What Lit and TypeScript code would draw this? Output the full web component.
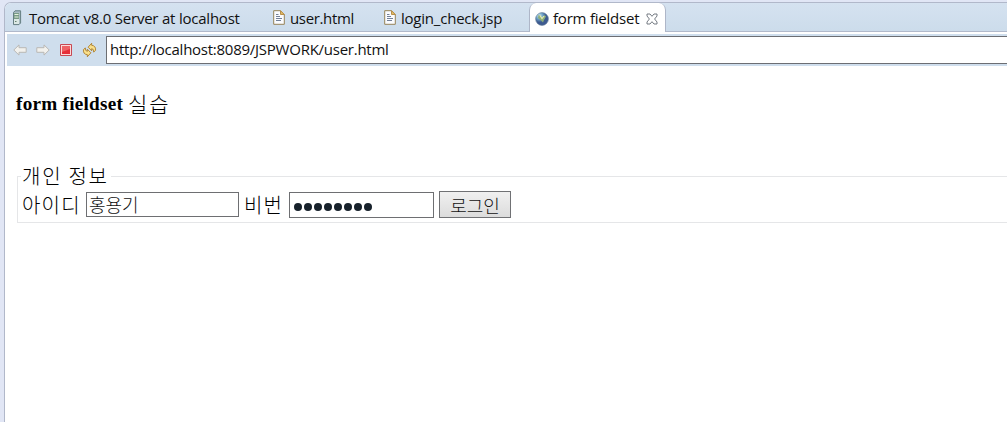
import { LitElement, html, css, svg } from "lit";
import { customElement } from "lit/decorators.js";

const serverIcon = html`<svg class="icon" width="10" height="16" viewBox="0 0 10 16">
  <path d="M1.5 2.5L3 .8H8.6V13L7 14.6H1.5Z" fill="#a9bcc4" stroke="#667f83"/>
  <path d="M2 3H7V14H2Z" fill="#dce8e5"/><path d="M2 3H7V9H2Z" fill="#789b85"/>
  <path d="M2.5 4.5H6.5M2.5 7H6.5" stroke="#e7f1df"/><path d="M3 11.5H4.5" stroke="#61806e"/>
</svg>`;

const fileIcon = html`<svg class="icon" width="12" height="15" viewBox="0 0 12 15">
  <path d="M.7.7H7.5L11.3 4.5V14.3H.7Z" fill="#fbfcff" stroke="#958358"/>
  <path d="M7.5.7V4.5H11.3Z" fill="#e6bd66" stroke="#b8904b"/>
  <path d="M3 4.5H5.5M3 6.5H7M3 8.5H9M3 10.5H8" stroke="#62728c" stroke-width=".9"/>
</svg>`;

const globeIcon = html`<svg class="icon" width="14" height="14" viewBox="0 0 14 14">
  <defs><radialGradient id="sea" cx=".3" cy=".25"><stop stop-color="#cbe8f4"/><stop offset=".55" stop-color="#6b9fc4"/><stop offset="1" stop-color="#3d5a90"/></radialGradient></defs>
  <circle cx="7" cy="7" r="6.4" fill="url(#sea)" stroke="#657d99" stroke-width=".6"/>
  <path d="M3.5 3L6 4L7.3 6.5L9.5 3L11 4.5L9 8L8 10.5L6 8.5L3 6Z" fill="#8fae78"/>
  <path d="M5 3.5L7 6.5L9 4" fill="none" stroke="#e8edb4" stroke-width="1.2"/>
</svg>`;

const closeIcon = html`<svg class="icon" width="12" height="12" viewBox="0 0 12 12">
  <path d="M1 1H4L6 3.3L8 1H11V3L8.6 6L11 9V11H8L6 8.7L4 11H1V9L3.4 6L1 3Z" fill="#fff" stroke="#666d76" stroke-width=".9"/>
</svg>`;

const arrow = svg`<path d="M.8 6L6 .9V3.7H13.2V8.3H6V11.1Z" fill="#f2f1ed" stroke="#b9b8b5" stroke-linejoin="round"/>`;

@customElement("app-root")
export class AppRoot extends LitElement {
  static styles = css`
    :host { display: block; height: 422px; overflow: hidden; background: #e1e6f5; color: #111; }
    * { box-sizing: border-box; }
    .view { height: 422px; margin-left: 4px; padding-top: 2px; }
    .frame { height: 420px; border: 1px solid #b1b8ca; border-width: 1px 0 0 1px; border-top-left-radius: 7px; background: #fff; overflow: hidden; }
    .tabs { display: flex; height: 29px; border-bottom: 1px solid #b1b9cb; background: linear-gradient(#d5e2f0, #ccdceb); font: 15px/28px "Open Sans", sans-serif; }
    .tab { display: flex; flex: none; align-items: center; white-space: pre; height: 29px; }
    .server { width: 259px; padding-left: 7px; gap: 7px; }
    .file1 { width: 111px; padding-left: 9px; gap: 5px; }
    .file2 { width: 149px; padding-left: 9px; gap: 5px; }
    .active { width: 137px; margin-left: 5px; padding-left: 5px; gap: 4px; background: #fff; border: 1px solid #aeb6c8; border-width: 0 1px; border-radius: 7px 7px 0 0; }
    .icon { display: block; flex: none; }
    .label { display: block; flex: none; height: 28px; }
    .active .icon { margin-top: 2px; }
    .t1 { width: 212px; letter-spacing: -.22px; }
    .t2 { width: 62px; letter-spacing: -.35px; }
    .t3 { width: 103px; letter-spacing: -.22px; }
    .t4 { width: 89px; letter-spacing: -.22px; }
    .bar { display: flex; align-items: center; margin: 2px 0 0 2px; height: 32px; background: #cfdeed; }
    .nav { display: grid; grid-template-columns: 23px 24px 22px 30px; align-items: center; width: 99px; padding-left: 6px; height: 32px; }
    .url { flex: 1; height: 28px; margin-bottom: 1px; border: 1px solid #6c6e73; border-right: 0; background: #fff; padding-left: 3px; font: 15px/25px "Open Sans", sans-serif; letter-spacing: -.25px; }
    .page { padding-left: 10px; font: 300 20px/24px "Noto Sans CJK KR", sans-serif; color: #000; }
    .title { display: flex; align-items: center; height: 24px; margin: 26px 0 0; font-weight: 300; font-size: 20px; }
    .latin { font: bold 19.2px/24px "Liberation Serif", serif; width: 113px; padding-left: 1px; white-space: pre; letter-spacing: .25px; font-variant-ligatures: none; }
    .head { font-size: 21px; letter-spacing: 2px; margin-top: -3px; }
    .form { height: 47px; margin: 60px 0 0 2px; border: 1px solid #e5e6e8; border-right: 0; padding-left: 4px; }
    .legend { display: block; width: 90px; height: 24px; margin: -13px 0 0 -1px; padding-left: 1px; background: #fff; letter-spacing: 1.75px; white-space: pre; }
    .row { display: flex; height: 28px; margin-top: 3px; }
    .ko { line-height: 28px; height: 28px; letter-spacing: 1.2px; white-space: pre; }
    .id { width: 64px; }
    .pw { width: 45px; }
    .field { border: 1px solid #6e6f72; background: #fff; height: 25px; margin-top: 1px; padding-left: 2px; font: 300 18px/22px "Noto Sans CJK KR", sans-serif; color: #111; }
    .name { width: 153px; margin-right: 5px; }
    .secret { display: flex; align-items: center; gap: 2px; width: 145px; height: 26px; padding: 4px 0 0 4px; margin-right: 5px; }
    .dot { width: 8px; height: 8px; border-radius: 50%; background: #17212b; }
    .login { width: 72px; height: 27px; border: 1px solid #707174; background: linear-gradient(#f0f0f0, #dcdcdc); padding: 0; font: 300 18px/24px "Noto Sans CJK KR", sans-serif; color: #111; text-align: center; }
  `;

  render() {
    return html`<div class="view"><div class="frame">
      <div class="tabs">
        <div class="tab server">${serverIcon}<span class="label t1">Tomcat v8.0 Server at localhost</span></div>
        <div class="tab file1">${fileIcon}<span class="label t2">user.html</span></div>
        <div class="tab file2">${fileIcon}<span class="label t3">login_check.jsp</span></div>
        <div class="tab active">${globeIcon}<span class="label t4">form fieldset</span>${closeIcon}</div>
      </div>
      <div class="bar">
        <div class="nav">
          <svg class="icon" width="14" height="12" viewBox="0 0 14 12">${arrow}</svg>
          <svg class="icon" width="14" height="12" viewBox="0 0 14 12"><g transform="translate(14 0) scale(-1 1)">${arrow}</g></svg>
          <svg class="icon" width="12" height="12" viewBox="0 0 12 12"><path d="M.5.5H11.5V11.5H.5Z" fill="#fbdada" stroke="#c84852"/><path d="M2 2H10V10H2Z" fill="#e62e38"/><path d="M2 2H10V5L2 8Z" fill="#ee6264"/></svg>
          <svg class="icon" width="15" height="16" viewBox="0 0 16 16"><g fill="#f9df8a" stroke="#a97823" stroke-width=".9" stroke-linejoin="round"><path d="M6.5 5L10.3 .8V3Q14.8 3.4 14.5 8.2L12.5 10.3Q12.6 6.7 10.3 6.6V8.8Z"/><path d="M9.5 11L5.7 15.2V13Q1.2 12.6 1.5 7.8L3.5 5.7Q3.4 9.3 5.7 9.4V7.2Z"/></g></svg>
        </div>
        <div class="url">http://localhost:8089/JSPWORK/user.html</div>
      </div>
      <div class="page">
        <h1 class="title"><span class="latin">form fieldset</span><span class="head">실습</span></h1>
        <div class="form">
          <span class="legend">개인 정보</span>
          <div class="row">
            <span class="ko id">아이디</span><div class="field name">홍용기</div>
            <span class="ko pw">비번</span><div class="field secret">${Array.from({ length: 8 }, () => html`<i class="dot"></i>`)}</div>
            <button class="login">로그인</button>
          </div>
        </div>
      </div>
    </div></div>`;
  }
}
